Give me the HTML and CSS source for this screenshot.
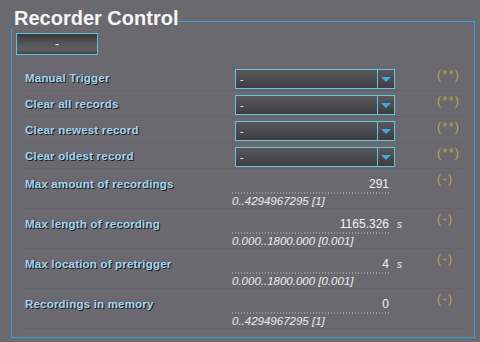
FILE: index.html
```html
<!DOCTYPE html>
<html lang="en">
<head>
	<meta charset="UTF-8">
	<title>Recorder Control</title>
	<link rel="stylesheet" href="styles.css">
</head>
<body>
	<div class="frame">
		<div class="title">Recorder Control</div>
		<button class="btn" type="button">-</button>

		<div class="rows">
			<div class="row row-select">
				<span class="label">Manual Trigger</span>
				<div class="select"><span class="select-text">-</span><span class="select-arrow"></span></div>
				<span class="status">(**)</span>
			</div>
			<div class="row row-select">
				<span class="label">Clear all records</span>
				<div class="select"><span class="select-text">-</span><span class="select-arrow"></span></div>
				<span class="status">(**)</span>
			</div>
			<div class="row row-select">
				<span class="label">Clear newest record</span>
				<div class="select"><span class="select-text">-</span><span class="select-arrow"></span></div>
				<span class="status">(**)</span>
			</div>
			<div class="row row-select">
				<span class="label">Clear oldest record</span>
				<div class="select"><span class="select-text">-</span><span class="select-arrow"></span></div>
				<span class="status">(**)</span>
			</div>

			<div class="row row-num">
				<span class="label">Max amount of recordings</span>
				<div class="field">
					<div class="value">291</div>
					<div class="range">0..4294967295 [1]</div>
				</div>
				<span class="unit"></span>
				<span class="status">(-)</span>
			</div>
			<div class="row row-num">
				<span class="label">Max length of recording</span>
				<div class="field">
					<div class="value">1165.326</div>
					<div class="range">0.000..1800.000 [0.001]</div>
				</div>
				<span class="unit">s</span>
				<span class="status">(-)</span>
			</div>
			<div class="row row-num">
				<span class="label">Max location of pretrigger</span>
				<div class="field">
					<div class="value">4</div>
					<div class="range">0.000..1800.000 [0.001]</div>
				</div>
				<span class="unit">s</span>
				<span class="status">(-)</span>
			</div>
			<div class="row row-num">
				<span class="label">Recordings in memory</span>
				<div class="field">
					<div class="value">0</div>
					<div class="range">0..4294967295 [1]</div>
				</div>
				<span class="unit"></span>
				<span class="status">(-)</span>
			</div>
		</div>
	</div>
</body>
</html>
```

FILE: styles.css
```css
* {
	margin: 0;
	padding: 0;
	box-sizing: border-box;
}
body {
	width: 480px;
	height: 342px;
	overflow: hidden;
	background-color: #6b6970;
	font-family: "Liberation Sans", Arial, sans-serif;
	color: #fff;
	padding: 21px 0 0 11px;
}
.frame {
	width: 464px;
	height: 317px;
	border: 1px solid #3c9fcf;
}
.title {
	width: 177px;
	height: 28px;
	margin: -22px 0 0 -12px;
	padding: 8px 0 0 14px;
	background-color: #6b6970;
	font-size: 20px;
	font-weight: bold;
	line-height: 20px;
	color: #f6f6f6;
	white-space: nowrap;
}
.btn {
	display: block;
	width: 82px;
	height: 22px;
	margin: 5px 0 0 4px;
	border: 1px solid #5fc2dd;
	background: linear-gradient(#39383b, #545358 45%, #5f5e63 80%, #444347);
	color: #fff;
	font: 12px "Liberation Sans", Arial, sans-serif;
	line-height: 18px;
}
.rows {
	margin: 10px 8px 0 10px;
}
.row {
	display: flex;
	align-items: flex-start;
	padding-left: 3px;
	border-bottom: 1px solid #656369;
}
.row-select {
	height: 26px;
}
.row-num {
	height: 40px;
}
.label {
	font-size: 11.5px;
	font-weight: bold;
	letter-spacing: 0.2px;
	line-height: 14px;
	color: #a3d4ee;
	text-shadow: 1px 1px 0 #1e1e22;
	white-space: nowrap;
}
.row-select .label {
	width: 210px;
	margin-top: 6px;
}
.row-num .label {
	width: 207px;
	margin-top: 8px;
}
.select {
	display: flex;
	width: 160px;
	height: 20px;
	margin: 4px 42px 0 0;
	border: 1px solid #63c6df;
	background: linear-gradient(#58575c, #3d3c40);
}
.select-text {
	flex: 1;
	padding-left: 4px;
	font-size: 11px;
	line-height: 18px;
	color: #e8e8e8;
}
.select-arrow {
	width: 17px;
	border-left: 1px solid #63c6df;
	position: relative;
}
.select-arrow::after {
	content: "";
	position: absolute;
	left: 3px;
	top: 7px;
	border-left: 5px solid transparent;
	border-right: 5px solid transparent;
	border-top: 5px solid #3ea9e2;
}
.status {
	margin-top: 3px;
	font-size: 12px;
	line-height: 14px;
	letter-spacing: 1.5px;
	color: #b9a83a;
}
.field {
	width: 159px;
	padding-top: 7px;
}
.value {
	height: 18px;
	padding-right: 2px;
	text-align: right;
	font-size: 12px;
	line-height: 16px;
	color: #f2f2f2;
	background-image: repeating-linear-gradient(to right, #98979c 0, #98979c 1px, transparent 1px, transparent 3px);
	background-size: 100% 2px;
	background-position: left bottom;
	background-repeat: no-repeat;
}
.range {
	margin-top: 1px;
	font-size: 11.5px;
	font-style: italic;
	line-height: 13px;
	color: #ececec;
	white-space: nowrap;
}
.unit {
	width: 46px;
	padding: 8px 0 0 6px;
	font-size: 10px;
	font-style: italic;
	line-height: 16px;
	color: #ececec;
}
```
